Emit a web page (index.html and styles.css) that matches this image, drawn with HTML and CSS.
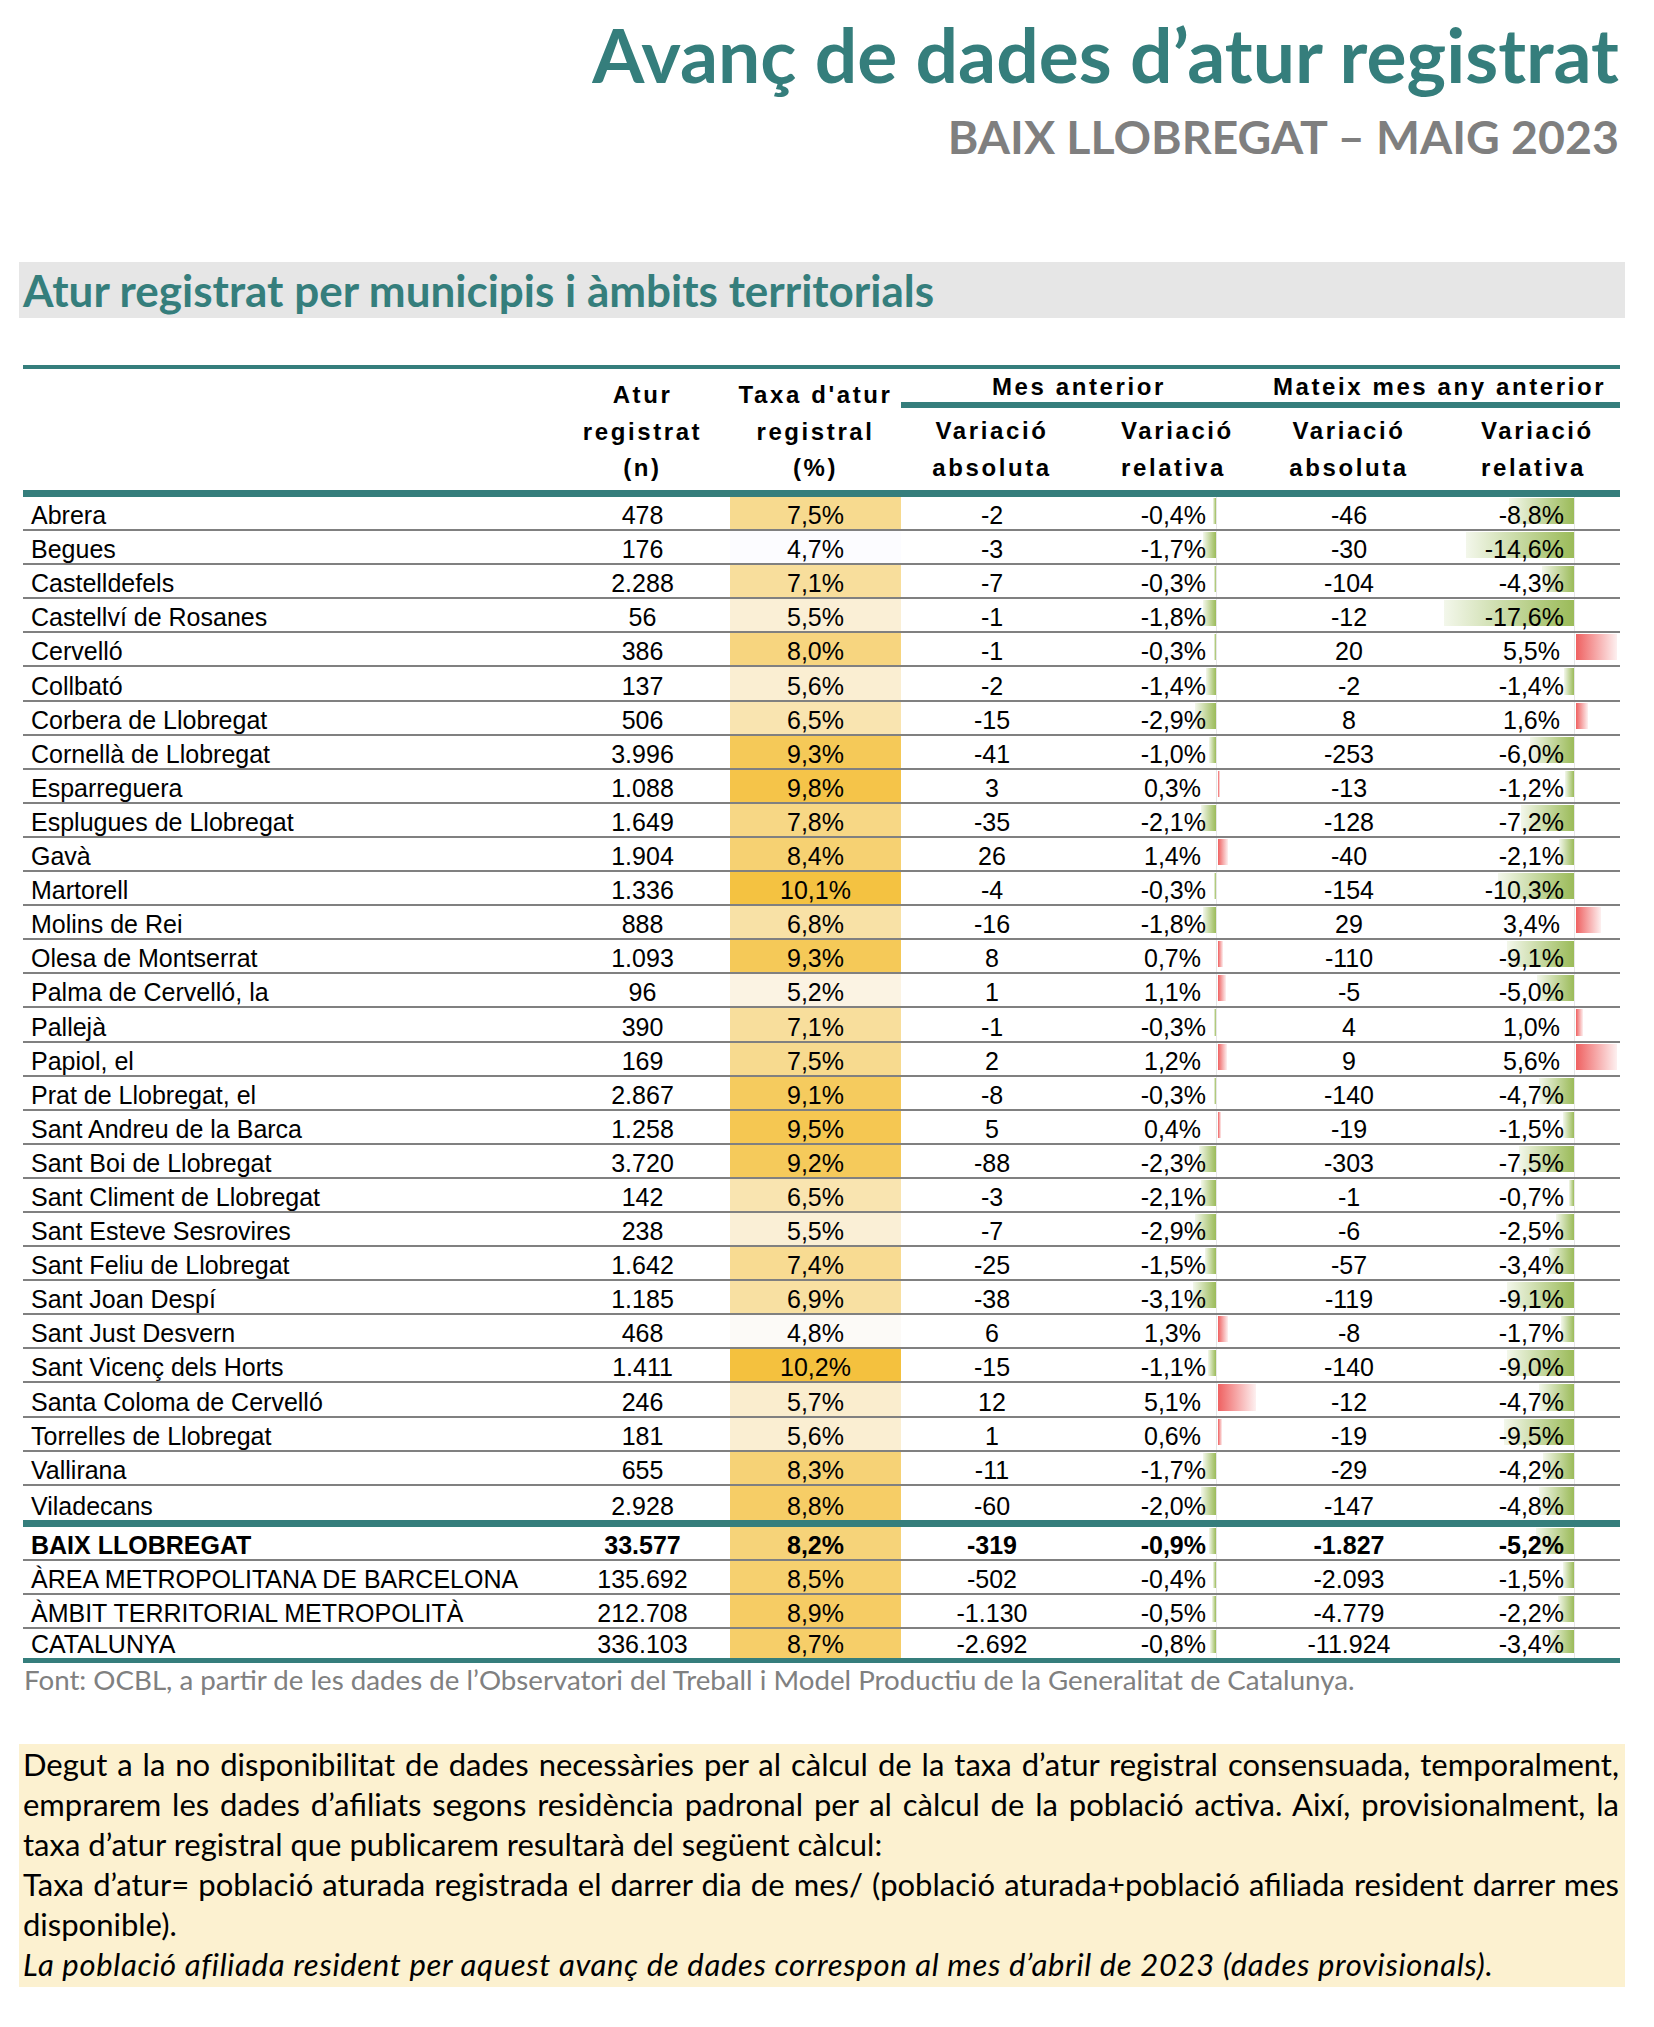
FILE: index.html
```html
<!DOCTYPE html>
<html lang="ca">
<head>
<meta charset="utf-8">
<title>Avanç de dades d’atur registrat</title>
<link rel="stylesheet" href="styles.css">
</head>
<body>
<header class="doc-head">
  <h1 class="title">Avanç de dades d’atur registrat</h1>
  <p class="subtitle">BAIX LLOBREGAT – MAIG 2023</p>
</header>

<h2 class="section">Atur registrat per municipis i àmbits territorials</h2>

<div class="table">
  <div class="thead">
    <div class="h-blank"></div>
    <div class="h-stack c2">Atur<br>registrat<br>(n)</div>
    <div class="h-stack c3">Taxa d'atur<br>registral<br>(%)</div>
    <div class="h-group mes">Mes anterior</div>
    <div class="h-group any">Mateix mes any anterior</div>
    <div class="h-sub c4">Variació<br>absoluta</div>
    <div class="h-sub c5 rel-m">Variació<br>relativa</div>
    <div class="h-sub c6">Variació<br>absoluta</div>
    <div class="h-sub c7 rel-y">Variació<br>relativa</div>
  </div>

  <div class="row"><div class="c-name">Abrera</div><div class="c-n">478</div><div class="c-tx" style="background:#f7da8f">7,5%</div><div class="c-abs">-2</div><div class="c-rel m"><span class="bar neg" style="width:3px"></span><span class="val">-0,4%</span></div><div class="c-abs">-46</div><div class="c-rel y"><span class="bar neg" style="width:65px"></span><span class="val">-8,8%</span></div></div>
  <div class="row"><div class="c-name">Begues</div><div class="c-n">176</div><div class="c-tx" style="background:#fcfcff">4,7%</div><div class="c-abs">-3</div><div class="c-rel m"><span class="bar neg" style="width:12.6px"></span><span class="val">-1,7%</span></div><div class="c-abs">-30</div><div class="c-rel y"><span class="bar neg" style="width:108px"></span><span class="val">-14,6%</span></div></div>
  <div class="row"><div class="c-name">Castelldefels</div><div class="c-n">2.288</div><div class="c-tx" style="background:#f8de9c">7,1%</div><div class="c-abs">-7</div><div class="c-rel m"><span class="bar neg" style="width:2.2px"></span><span class="val">-0,3%</span></div><div class="c-abs">-104</div><div class="c-rel y"><span class="bar neg" style="width:31.8px"></span><span class="val">-4,3%</span></div></div>
  <div class="row"><div class="c-name">Castellví de Rosanes</div><div class="c-n">56</div><div class="c-tx" style="background:#faefd6">5,5%</div><div class="c-abs">-1</div><div class="c-rel m"><span class="bar neg" style="width:13.3px"></span><span class="val">-1,8%</span></div><div class="c-abs">-12</div><div class="c-rel y"><span class="bar neg" style="width:130px"></span><span class="val">-17,6%</span></div></div>
  <div class="row"><div class="c-name">Cervelló</div><div class="c-n">386</div><div class="c-tx" style="background:#f7d57f">8,0%</div><div class="c-abs">-1</div><div class="c-rel m"><span class="bar neg" style="width:2.2px"></span><span class="val">-0,3%</span></div><div class="c-abs">20</div><div class="c-rel y up"><span class="bar pos" style="width:40.7px"></span><span class="val">5,5%</span></div></div>
  <div class="row"><div class="c-name">Collbató</div><div class="c-n">137</div><div class="c-tx" style="background:#faeed2">5,6%</div><div class="c-abs">-2</div><div class="c-rel m"><span class="bar neg" style="width:10.4px"></span><span class="val">-1,4%</span></div><div class="c-abs">-2</div><div class="c-rel y"><span class="bar neg" style="width:10.4px"></span><span class="val">-1,4%</span></div></div>
  <div class="row"><div class="c-name">Corbera de Llobregat</div><div class="c-n">506</div><div class="c-tx" style="background:#f9e4b0">6,5%</div><div class="c-abs">-15</div><div class="c-rel m"><span class="bar neg" style="width:21.5px"></span><span class="val">-2,9%</span></div><div class="c-abs">8</div><div class="c-rel y up"><span class="bar pos" style="width:11.8px"></span><span class="val">1,6%</span></div></div>
  <div class="row"><div class="c-name">Cornellà de Llobregat</div><div class="c-n">3.996</div><div class="c-tx" style="background:#f5c958">9,3%</div><div class="c-abs">-41</div><div class="c-rel m"><span class="bar neg" style="width:7.4px"></span><span class="val">-1,0%</span></div><div class="c-abs">-253</div><div class="c-rel y"><span class="bar neg" style="width:44.4px"></span><span class="val">-6,0%</span></div></div>
  <div class="row"><div class="c-name">Esparreguera</div><div class="c-n">1.088</div><div class="c-tx" style="background:#f5c449">9,8%</div><div class="c-abs">3</div><div class="c-rel m up"><span class="bar pos" style="width:2.2px"></span><span class="val">0,3%</span></div><div class="c-abs">-13</div><div class="c-rel y"><span class="bar neg" style="width:8.9px"></span><span class="val">-1,2%</span></div></div>
  <div class="row"><div class="c-name">Esplugues de Llobregat</div><div class="c-n">1.649</div><div class="c-tx" style="background:#f7d785">7,8%</div><div class="c-abs">-35</div><div class="c-rel m"><span class="bar neg" style="width:15.5px"></span><span class="val">-2,1%</span></div><div class="c-abs">-128</div><div class="c-rel y"><span class="bar neg" style="width:53.3px"></span><span class="val">-7,2%</span></div></div>
  <div class="row"><div class="c-name">Gavà</div><div class="c-n">1.904</div><div class="c-tx" style="background:#f6d172">8,4%</div><div class="c-abs">26</div><div class="c-rel m up"><span class="bar pos" style="width:10.4px"></span><span class="val">1,4%</span></div><div class="c-abs">-40</div><div class="c-rel y"><span class="bar neg" style="width:15.5px"></span><span class="val">-2,1%</span></div></div>
  <div class="row"><div class="c-name">Martorell</div><div class="c-n">1.336</div><div class="c-tx" style="background:#f4c241">10,1%</div><div class="c-abs">-4</div><div class="c-rel m"><span class="bar neg" style="width:2.2px"></span><span class="val">-0,3%</span></div><div class="c-abs">-154</div><div class="c-rel y"><span class="bar neg" style="width:76.2px"></span><span class="val">-10,3%</span></div></div>
  <div class="row"><div class="c-name">Molins de Rei</div><div class="c-n">888</div><div class="c-tx" style="background:#f8e1a6">6,8%</div><div class="c-abs">-16</div><div class="c-rel m"><span class="bar neg" style="width:13.3px"></span><span class="val">-1,8%</span></div><div class="c-abs">29</div><div class="c-rel y up"><span class="bar pos" style="width:25.2px"></span><span class="val">3,4%</span></div></div>
  <div class="row"><div class="c-name">Olesa de Montserrat</div><div class="c-n">1.093</div><div class="c-tx" style="background:#f5c958">9,3%</div><div class="c-abs">8</div><div class="c-rel m up"><span class="bar pos" style="width:5.2px"></span><span class="val">0,7%</span></div><div class="c-abs">-110</div><div class="c-rel y"><span class="bar neg" style="width:67.3px"></span><span class="val">-9,1%</span></div></div>
  <div class="row"><div class="c-name">Palma de Cervelló, la</div><div class="c-n">96</div><div class="c-tx" style="background:#fbf3e3">5,2%</div><div class="c-abs">1</div><div class="c-rel m up"><span class="bar pos" style="width:8.1px"></span><span class="val">1,1%</span></div><div class="c-abs">-5</div><div class="c-rel y"><span class="bar neg" style="width:37px"></span><span class="val">-5,0%</span></div></div>
  <div class="row"><div class="c-name">Pallejà</div><div class="c-n">390</div><div class="c-tx" style="background:#f8de9c">7,1%</div><div class="c-abs">-1</div><div class="c-rel m"><span class="bar neg" style="width:2.2px"></span><span class="val">-0,3%</span></div><div class="c-abs">4</div><div class="c-rel y up"><span class="bar pos" style="width:7.4px"></span><span class="val">1,0%</span></div></div>
  <div class="row"><div class="c-name">Papiol, el</div><div class="c-n">169</div><div class="c-tx" style="background:#f7da8f">7,5%</div><div class="c-abs">2</div><div class="c-rel m up"><span class="bar pos" style="width:8.9px"></span><span class="val">1,2%</span></div><div class="c-abs">9</div><div class="c-rel y up"><span class="bar pos" style="width:41.4px"></span><span class="val">5,6%</span></div></div>
  <div class="row"><div class="c-name">Prat de Llobregat, el</div><div class="c-n">2.867</div><div class="c-tx" style="background:#f5cb5e">9,1%</div><div class="c-abs">-8</div><div class="c-rel m"><span class="bar neg" style="width:2.2px"></span><span class="val">-0,3%</span></div><div class="c-abs">-140</div><div class="c-rel y"><span class="bar neg" style="width:34.8px"></span><span class="val">-4,7%</span></div></div>
  <div class="row"><div class="c-name">Sant Andreu de la Barca</div><div class="c-n">1.258</div><div class="c-tx" style="background:#f5c752">9,5%</div><div class="c-abs">5</div><div class="c-rel m up"><span class="bar pos" style="width:3px"></span><span class="val">0,4%</span></div><div class="c-abs">-19</div><div class="c-rel y"><span class="bar neg" style="width:11.1px"></span><span class="val">-1,5%</span></div></div>
  <div class="row"><div class="c-name">Sant Boi de Llobregat</div><div class="c-n">3.720</div><div class="c-tx" style="background:#f5ca5b">9,2%</div><div class="c-abs">-88</div><div class="c-rel m"><span class="bar neg" style="width:17px"></span><span class="val">-2,3%</span></div><div class="c-abs">-303</div><div class="c-rel y"><span class="bar neg" style="width:55.5px"></span><span class="val">-7,5%</span></div></div>
  <div class="row"><div class="c-name">Sant Climent de Llobregat</div><div class="c-n">142</div><div class="c-tx" style="background:#f9e4b0">6,5%</div><div class="c-abs">-3</div><div class="c-rel m"><span class="bar neg" style="width:15.5px"></span><span class="val">-2,1%</span></div><div class="c-abs">-1</div><div class="c-rel y"><span class="bar neg" style="width:5.2px"></span><span class="val">-0,7%</span></div></div>
  <div class="row"><div class="c-name">Sant Esteve Sesrovires</div><div class="c-n">238</div><div class="c-tx" style="background:#faefd6">5,5%</div><div class="c-abs">-7</div><div class="c-rel m"><span class="bar neg" style="width:21.5px"></span><span class="val">-2,9%</span></div><div class="c-abs">-6</div><div class="c-rel y"><span class="bar neg" style="width:18.5px"></span><span class="val">-2,5%</span></div></div>
  <div class="row"><div class="c-name">Sant Feliu de Llobregat</div><div class="c-n">1.642</div><div class="c-tx" style="background:#f8db92">7,4%</div><div class="c-abs">-25</div><div class="c-rel m"><span class="bar neg" style="width:11.1px"></span><span class="val">-1,5%</span></div><div class="c-abs">-57</div><div class="c-rel y"><span class="bar neg" style="width:25.2px"></span><span class="val">-3,4%</span></div></div>
  <div class="row"><div class="c-name">Sant Joan Despí</div><div class="c-n">1.185</div><div class="c-tx" style="background:#f8e0a2">6,9%</div><div class="c-abs">-38</div><div class="c-rel m"><span class="bar neg" style="width:22.9px"></span><span class="val">-3,1%</span></div><div class="c-abs">-119</div><div class="c-rel y"><span class="bar neg" style="width:67.3px"></span><span class="val">-9,1%</span></div></div>
  <div class="row"><div class="c-name">Sant Just Desvern</div><div class="c-n">468</div><div class="c-tx" style="background:#fcfaf7">4,8%</div><div class="c-abs">6</div><div class="c-rel m up"><span class="bar pos" style="width:9.6px"></span><span class="val">1,3%</span></div><div class="c-abs">-8</div><div class="c-rel y"><span class="bar neg" style="width:12.6px"></span><span class="val">-1,7%</span></div></div>
  <div class="row"><div class="c-name">Sant Vicenç dels Horts</div><div class="c-n">1.411</div><div class="c-tx" style="background:#f4c13e">10,2%</div><div class="c-abs">-15</div><div class="c-rel m"><span class="bar neg" style="width:8.1px"></span><span class="val">-1,1%</span></div><div class="c-abs">-140</div><div class="c-rel y"><span class="bar neg" style="width:66.6px"></span><span class="val">-9,0%</span></div></div>
  <div class="row"><div class="c-name">Santa Coloma de Cervelló</div><div class="c-n">246</div><div class="c-tx" style="background:#faedce">5,7%</div><div class="c-abs">12</div><div class="c-rel m up"><span class="bar pos" style="width:37.7px"></span><span class="val">5,1%</span></div><div class="c-abs">-12</div><div class="c-rel y"><span class="bar neg" style="width:34.8px"></span><span class="val">-4,7%</span></div></div>
  <div class="row"><div class="c-name">Torrelles de Llobregat</div><div class="c-n">181</div><div class="c-tx" style="background:#faeed2">5,6%</div><div class="c-abs">1</div><div class="c-rel m up"><span class="bar pos" style="width:4.4px"></span><span class="val">0,6%</span></div><div class="c-abs">-19</div><div class="c-rel y"><span class="bar neg" style="width:70.3px"></span><span class="val">-9,5%</span></div></div>
  <div class="row"><div class="c-name">Vallirana</div><div class="c-n">655</div><div class="c-tx" style="background:#f6d276">8,3%</div><div class="c-abs">-11</div><div class="c-rel m"><span class="bar neg" style="width:12.6px"></span><span class="val">-1,7%</span></div><div class="c-abs">-29</div><div class="c-rel y"><span class="bar neg" style="width:31.1px"></span><span class="val">-4,2%</span></div></div>
  <div class="row last-mun"><div class="c-name">Viladecans</div><div class="c-n">2.928</div><div class="c-tx" style="background:#f6cd66">8,8%</div><div class="c-abs">-60</div><div class="c-rel m"><span class="bar neg" style="width:14.8px"></span><span class="val">-2,0%</span></div><div class="c-abs">-147</div><div class="c-rel y"><span class="bar neg" style="width:35.5px"></span><span class="val">-4,8%</span></div></div>
  <div class="row total"><div class="c-name">BAIX LLOBREGAT</div><div class="c-n">33.577</div><div class="c-tx" style="background:#f6d379">8,2%</div><div class="c-abs">-319</div><div class="c-rel m"><span class="bar neg" style="width:6.7px"></span><span class="val">-0,9%</span></div><div class="c-abs">-1.827</div><div class="c-rel y"><span class="bar neg" style="width:38.5px"></span><span class="val">-5,2%</span></div></div>
  <div class="row"><div class="c-name">ÀREA METROPOLITANA DE BARCELONA</div><div class="c-n">135.692</div><div class="c-tx" style="background:#f6d06f">8,5%</div><div class="c-abs">-502</div><div class="c-rel m"><span class="bar neg" style="width:3px"></span><span class="val">-0,4%</span></div><div class="c-abs">-2.093</div><div class="c-rel y"><span class="bar neg" style="width:11.1px"></span><span class="val">-1,5%</span></div></div>
  <div class="row"><div class="c-name">ÀMBIT TERRITORIAL METROPOLITÀ</div><div class="c-n">212.708</div><div class="c-tx" style="background:#f6cc64">8,9%</div><div class="c-abs">-1.130</div><div class="c-rel m"><span class="bar neg" style="width:3.7px"></span><span class="val">-0,5%</span></div><div class="c-abs">-4.779</div><div class="c-rel y"><span class="bar neg" style="width:16.3px"></span><span class="val">-2,2%</span></div></div>
  <div class="row end"><div class="c-name">CATALUNYA</div><div class="c-n">336.103</div><div class="c-tx" style="background:#f6ce69">8,7%</div><div class="c-abs">-2.692</div><div class="c-rel m"><span class="bar neg" style="width:5.9px"></span><span class="val">-0,8%</span></div><div class="c-abs">-11.924</div><div class="c-rel y"><span class="bar neg" style="width:25.2px"></span><span class="val">-3,4%</span></div></div>
</div>

<p class="source">Font: OCBL, a partir de les dades de l’Observatori del Treball i Model Productiu de la Generalitat de Catalunya.</p>

<div class="note">
  <span class="ln j">Degut a la no disponibilitat de dades necessàries per al càlcul de la taxa d’atur registral consensuada, temporalment,</span>
  <span class="ln j">emprarem les dades d’afiliats segons residència padronal per al càlcul de la població activa. Així, provisionalment, la</span>
  <span class="ln">taxa d’atur registral que publicarem resultarà del següent càlcul:</span>
  <span class="ln j">Taxa d’atur= població aturada registrada el darrer dia de mes/ (població aturada+població afiliada resident darrer mes</span>
  <span class="ln">disponible).</span>
  <span class="ln it">La població afiliada resident per aquest avanç de dades correspon al mes d’abril de 2023 (dades provisionals).</span>
</div>
</body>
</html>
```

FILE: styles.css
```css
* { box-sizing: border-box; }

body {
  margin: 0;
  width: 1654px;
  background: #ffffff;
  color: #000000;
  font-family: "Liberation Sans", Arial, sans-serif;
}

/* ---------- page heading ---------- */
.doc-head {
  padding: 16px 35px 0 0;
  text-align: right;
  font-family: Lato, "Open Sans", sans-serif;
  font-weight: 700;
}
.title {
  margin: 0;
  font-size: 75px;
  line-height: 76px;
  font-weight: 700;
  color: #357e7c;
}
.subtitle {
  margin: 21px 0 0;
  font-size: 46.5px;
  line-height: 46px;
  color: #7f7f7f;
}

/* ---------- section bar ---------- */
.section {
  margin: 103px 29px 0 19px;
  height: 56px;
  padding-left: 4px;
  background: #e6e6e6;
  color: #357e7c;
  font: 700 44px/56px Lato, "Open Sans", sans-serif;
}

/* ---------- table ---------- */
.table {
  --cols: 532px 175px 171px 182px 134px 264px 139px;
  margin: 47px 34px 0 23px;
}

.thead {
  display: grid;
  grid-template-columns: var(--cols);
  grid-template-rows: 39px 82px;
  border-top: 4px solid #357e7c;
  border-bottom: 7px solid #357e7c;
  font-size: 24px;
  font-weight: 700;
  letter-spacing: 2.6px;
}
.h-blank { grid-row: 1 / 3; grid-column: 1; }
.h-stack {
  grid-row: 1 / 3;
  padding-top: 8px;
  line-height: 36.5px;
  text-align: center;
}
.h-stack.c2 { grid-column: 2; }
.h-stack.c3 { grid-column: 3; }
.h-group {
  grid-row: 1;
  padding-top: 3px;
  line-height: 30px;
  text-align: center;
  border-bottom: 6px solid #357e7c;
}
.h-group.mes { grid-column: 4 / 6; padding-left: 40px; }
.h-group.any { grid-column: 6 / 8; padding-left: 42px; }
.h-sub {
  grid-row: 2;
  padding-top: 5px;
  line-height: 36.5px;
  text-align: center;
}
.h-sub.c4 { grid-column: 4; }
.h-sub.c5 { grid-column: 5; }
.h-sub.c6 { grid-column: 6; }
.h-sub.c7 { grid-column: 7; }
.h-sub.rel-m { padding-left: 38px; }
.h-sub.rel-y { padding-right: 46px; }

.row {
  display: grid;
  grid-template-columns: var(--cols);
  height: 34.1px;
  border-bottom: 2px solid #808080;
  font-size: 25px;
  line-height: 27px;
}
.row > div {
  display: flex;
  align-items: flex-end;
  white-space: nowrap;
}
.row.last-mun {
  height: 41.1px;
  border-bottom: 7px solid #357e7c;
}
.row.end {
  border-bottom: 5px solid #357e7c;
}
.row.total { font-weight: 700; }

.c-name { padding-left: 8px; }
.c-n, .c-tx, .c-abs { justify-content: center; }

.c-rel {
  position: relative;
  justify-content: flex-end;
}
.c-rel.m { padding-right: 11px; }
.c-rel.m.up { padding-right: 16px; }
.c-rel.y { padding-right: 56px; }
.c-rel.y.up { padding-right: 60px; }

.c-rel::after {
  content: "";
  position: absolute;
  top: 0;
  bottom: 0;
  width: 1px;
  background: #e6e6e6;
}
.c-rel.m::after { right: 0; }
.c-rel.y::after { right: 45px; }

.val { position: relative; z-index: 1; }

.bar {
  position: absolute;
  top: 1px;
  bottom: 5px;
}
.bar.neg { background: linear-gradient(to left, #9bbb59, #f3f7eb); }
.bar.pos { background: linear-gradient(to right, #ef6161, #fdf0f0); }
.c-rel.m .bar.neg { right: 1px; }
.c-rel.m .bar.pos { left: calc(100% + 1px); }
.c-rel.y .bar.neg { right: 46px; }
.c-rel.y .bar.pos { left: calc(100% - 44px); }

/* ---------- source & note ---------- */
.source {
  margin: 3px 0 0 24px;
  color: #808080;
  font: 400 27.7px/28px Lato, "Open Sans", sans-serif;
}

.note {
  margin: 50px 29px 0 19px;
  height: 243px;
  padding: 0 6px 0 4px;
  background: #fcf1d0;
  font: 400 31px/40px Lato, "Open Sans", sans-serif;
  color: #000000;
}
.ln { display: block; white-space: nowrap; }
.ln.j {
  text-align: justify;
  text-align-last: justify;
  white-space: normal;
  word-spacing: -3px;
}
.ln.it { font-style: italic; letter-spacing: 0.68px; }
```
